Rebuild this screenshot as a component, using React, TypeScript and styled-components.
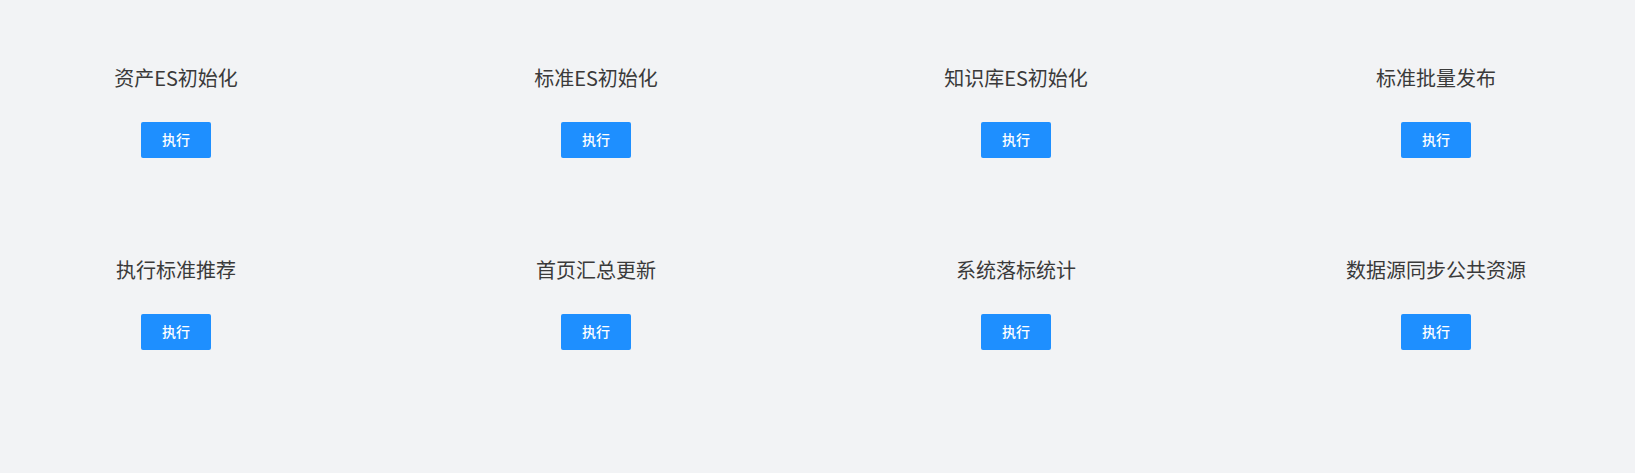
import styled, { createGlobalStyle } from "styled-components";

const GlobalStyle = createGlobalStyle`
  html, body {
    margin: 0;
    padding: 0;
    background: #f2f3f5;
  }
  body {
    font-family: "Noto Sans CJK SC", "Noto Sans", sans-serif;
  }
`;

const Page = styled.div`
  min-height: 473px;
  box-sizing: border-box;
  padding-top: 64px;
  background: #f2f3f5;
`;

const Grid = styled.div`
  display: grid;
  grid-template-columns: repeat(4, 352px);
  column-gap: 68px;
  row-gap: 98px;
`;

const Task = styled.div`
  display: flex;
  flex-direction: column;
  align-items: center;
`;

const Title = styled.div`
  font-size: 20px;
  line-height: 28px;
  color: #3a3a3a;
  margin-bottom: 30px;
  white-space: nowrap;
`;

const RunButton = styled.button`
  width: 70px;
  height: 36px;
  border: none;
  border-radius: 2px;
  background: #1e8fff;
  color: #fff;
  font-family: "Noto Sans CJK SC", sans-serif;
  font-size: 14px;
  font-weight: 500;
  line-height: 20px;
  cursor: pointer;
  padding: 0 0 2px;
`;

const tasks = [
  "资产ES初始化",
  "标准ES初始化",
  "知识库ES初始化",
  "标准批量发布",
  "执行标准推荐",
  "首页汇总更新",
  "系统落标统计",
  "数据源同步公共资源",
];

export default function App() {
  return (
    <Page>
      <GlobalStyle />
      <Grid>
        {tasks.map((t) => (
          <Task key={t}>
            <Title>{t}</Title>
            <RunButton>执行</RunButton>
          </Task>
        ))}
      </Grid>
    </Page>
  );
}
